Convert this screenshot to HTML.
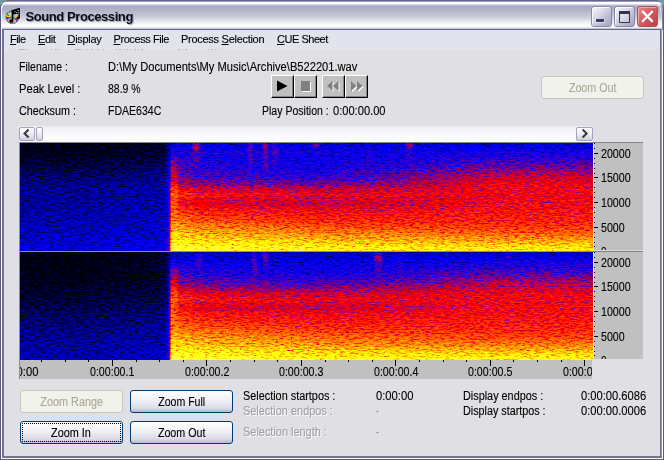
<!DOCTYPE html>
<html>
<head>
<meta charset="utf-8">
<title>Sound Processing</title>
<style>
html,body{margin:0;padding:0;}
body{width:664px;height:460px;overflow:hidden;background:#6b9aa6;position:relative;
 font-family:"Liberation Sans",sans-serif;font-size:11px;color:#000;}
.abs{position:absolute;}
#win{will-change:transform;position:absolute;left:0;top:0;width:664px;height:460px;background:#e0dfe3;border-radius:8px 8px 0 0;overflow:hidden;}
#bl0{left:0;top:0;width:1px;height:460px;background:#5c5c7c;}
#bl1{left:1px;top:6px;width:1px;height:453px;background:#f4f4fa;}
#bl2{left:2px;top:29px;width:2px;height:429px;background:#74748f;}
#br0{left:663px;top:0;width:1px;height:460px;background:#5c5c7c;}
#br1{left:662px;top:30px;width:1px;height:429px;background:#f8f8fc;}
#br2{left:661px;top:29px;width:1px;height:429px;background:#9a9ab4;}
#br3{left:660px;top:29px;width:1px;height:428px;background:#6a6a8a;}
#bb0{left:0;top:459px;width:664px;height:1px;background:#5c5c7c;}
#bb1{left:1px;top:458px;width:662px;height:1px;background:#f8f8fc;}
#bb2{left:2px;top:456px;width:660px;height:2px;background:#74748f;}
#title{left:0;top:0;width:664px;height:30px;border-radius:8px 8px 0 0;box-shadow:inset 0 0 0 1px #65658a;
 background:linear-gradient(to bottom,#62627f 0px,#6c6c8a 1px,#9c9cb6 1.5px,#ffffff 2.2px,#ffffff 3.6px,#c4c4d8 5px,#a9a9c6 6.5px,#b8b9cc 12px,#d0d2dc 18px,#ebecf0 22px,#fdfdfd 25px,#fdfdfd 27px,#c8c8d4 28.5px,#6e6e8e 29px,#6e6e8e 30px);}
#thl{left:1px;top:1.6px;width:658.2px;height:12px;border:1.6px solid #fff;border-bottom:none;border-radius:7px 7px 0 0;-webkit-mask-image:linear-gradient(to bottom,#000 0,#000 5px,transparent 12px);mask-image:linear-gradient(to bottom,#000 0,#000 5px,transparent 12px);}
#ttext{left:25.5px;top:9px;letter-spacing:-0.42px;font-weight:bold;font-size:13px;line-height:16px;white-space:nowrap;color:#0c0c14;text-shadow:1px 1px 1px rgba(120,120,150,.7);}
#menubar{left:4px;top:30px;width:656px;height:20px;background:#e2e4ed;}
.mi{position:absolute;top:32px;line-height:14px;white-space:nowrap;}
.mi u{text-decoration:underline;text-underline-offset:1px;}
.lbl{position:absolute;white-space:nowrap;line-height:14px;font-size:12px;}
.sx,.sc,.mi{-webkit-text-stroke:0.12px currentColor;}
.sx{display:inline-block;transform-origin:0 50%;white-space:nowrap;}
.sc{display:inline-block;transform-origin:50% 50%;white-space:nowrap;}
.dis{color:#a0a0a4;text-shadow:1px 1px 0 #fff;}
.cb{position:absolute;width:23px;height:23px;background:#c0c0c0;box-sizing:border-box;
 border:1px solid;border-color:#ffffff #000 #000 #ffffff;box-shadow:inset -1px -1px 0 #868686;}
.xb{position:absolute;width:103px;height:23px;box-sizing:border-box;border:1px solid #003c74;border-radius:3px;
 background:linear-gradient(to bottom,#ffffff 0%,#f4f4f8 35%,#dcdce8 80%,#b8b8d0 100%);text-align:center;line-height:23px;font-size:12px;}
.xd{position:absolute;width:103px;height:23px;box-sizing:border-box;border:1px solid #c9c7ba;border-radius:3px;background:#f2f2ec;
 text-align:center;line-height:23px;color:#aca899;font-size:12px;}
.tb{position:absolute;top:6px;width:21px;height:21px;box-sizing:border-box;border:1px solid #8a8aa8;border-radius:3px;
 background:linear-gradient(135deg,#f4f4fb 0%,#dcdcea 35%,#b4b4cc 75%,#a4a4c0 100%);box-shadow:inset 1px 1px 0 rgba(255,255,255,.8);}
#tbx{border-color:#b05058;background:linear-gradient(135deg,#e88888 0%,#d86468 40%,#c44a50 80%,#b84048 100%);box-shadow:inset 1px 1px 0 rgba(255,200,200,.6);}
#sbt{left:19px;top:126px;width:574px;height:16px;background:linear-gradient(to bottom,#ebebf0 0px,#f4f4f8 4px,#fcfcfd 11px,#fdfdfd 16px);}
.sbb{position:absolute;top:127px;height:14px;box-sizing:border-box;border:1px solid #a4a4bc;border-radius:2px;
 background:linear-gradient(to bottom,#ffffff 0%,#f0f0f6 40%,#d0d0e0 100%);}
#scale{left:593px;top:142px;width:50px;height:217px;background:#c0c0c0;overflow:hidden;}
#taxis{left:20px;top:360px;width:572px;height:19px;background:#c0c0c0;overflow:hidden;}
.ax{position:absolute;white-space:nowrap;line-height:14px;font-size:12px;}
</style>
</head>
<body>
<div id="win">
 <div id="title" class="abs"></div><div id="thl" class="abs"></div>
 <div id="menubar" class="abs"></div>
 <div class="abs" style="left:662px;top:7px;width:1px;height:23px;background:linear-gradient(to bottom,rgba(120,120,155,.3),#8484a4 6px)"></div>
 <div id="bl0" class="abs"></div><div id="bl1" class="abs"></div><div id="bl2" class="abs"></div>
 <div id="br0" class="abs"></div><div id="br1" class="abs"></div><div id="br2" class="abs"></div><div id="br3" class="abs"></div>
 <div id="bb2" class="abs"></div><div id="bb1" class="abs"></div><div id="bb0" class="abs"></div>

 <svg class="abs" style="left:0;top:49px" width="240" height="1" fill="#b4ae96" fill-opacity=".75"><rect x="13" y="0" width="1" height="1"/><rect x="19" y="0" width="6" height="1"/><rect x="26" y="0" width="1" height="1"/><rect x="45" y="0" width="1" height="1"/><rect x="51" y="0" width="1" height="1"/><rect x="55" y="0" width="1" height="1"/><rect x="57" y="0" width="1" height="1"/><rect x="59" y="0" width="1" height="1"/><rect x="75" y="0" width="6" height="1"/><rect x="82" y="0" width="1" height="1"/><rect x="87" y="0" width="1" height="1"/><rect x="91" y="0" width="2" height="1"/><rect x="97" y="0" width="2" height="1"/><rect x="103" y="0" width="1" height="1"/><rect x="116" y="0" width="1" height="1"/><rect x="119" y="0" width="2" height="1"/><rect x="123" y="0" width="1" height="1"/><rect x="126" y="0" width="2" height="1"/><rect x="130" y="0" width="1" height="1"/><rect x="134" y="0" width="2" height="1"/><rect x="138" y="0" width="1" height="1"/><rect x="141" y="0" width="2" height="1"/><rect x="178" y="0" width="2" height="1"/><rect x="182" y="0" width="1" height="1"/><rect x="185" y="0" width="2" height="1"/><rect x="208" y="0" width="1" height="1"/><rect x="211" y="0" width="2" height="1"/><rect x="215" y="0" width="1" height="1"/><rect x="218" y="0" width="1" height="1"/><rect x="6" y="0" width="1" height="1" fill="#fff"/></svg>

 <svg class="abs" style="left:5px;top:7px" width="20" height="20" viewBox="0 0 20 20">
  <circle cx="7.3" cy="10.3" r="6.2" fill="#b8b8b8" stroke="#111" stroke-width="1.1" stroke-dasharray="1 1.1"/>
  <circle cx="5.5" cy="8" r="2.2" fill="#d8d8d8"/>
  <path d="M7.3 10.3L1.6 6.6L1.2 8.2z" fill="#0b0"/><path d="M7.3 10.3L1.2 8.2L1.1 9.7z" fill="#fe0"/><path d="M7.3 10.3L1.1 9.7L1.2 11.2z" fill="#f00"/><path d="M7.3 10.3L1.2 11.2L1.6 12.4z" fill="#22e"/>
  <path d="M7.3 10.3L13.4 9.6L13.5 11.2z" fill="#fe0"/><path d="M7.3 10.3L13.5 11.2L13.2 12.8z" fill="#f00"/><path d="M7.3 10.3L13.2 12.8L12.5 14.2z" fill="#32d"/>
  <path d="M6.6 3.2L15 0.8V10.4C15 12.2 11.6 12.6 11.6 10.8C11.6 9.6 13.4 9.4 13.6 9.8V6.2L8.4 7.6V13.8C8.4 16.4 4.3 16.4 4.3 13.9C4.3 12.3 6.4 12.2 6.6 12.8z" fill="#000"/>
  <rect x="9.5" y="4.2" width="1" height="1" fill="#fff"/><rect x="11.2" y="5" width="1" height="1" fill="#ddd"/><rect x="12.6" y="3" width="1" height="1" fill="#fff"/><rect x="13.4" y="5.2" width="1" height="1" fill="#ddd"/><rect x="11.8" y="7.6" width="1" height="1" fill="#eee"/>
 </svg>
 <div id="ttext" class="abs">Sound Processing</div>
 <div class="mi" style="left:10px;letter-spacing:-0.57px"><u>F</u>ile</div>
 <div class="mi" style="left:38px;letter-spacing:-0.37px"><u>E</u>dit</div>
 <div class="mi" style="left:67.5px;letter-spacing:-0.3px"><u>D</u>isplay</div>
 <div class="mi" style="left:113.5px;letter-spacing:-0.42px"><u>P</u>rocess File</div>
 <div class="mi" style="left:181px;letter-spacing:-0.28px">Process <u>S</u>election</div>
 <div class="mi" style="left:277px;letter-spacing:-0.47px"><u>C</u>UE Sheet</div>
 <div class="lbl" style="left:18.8px;top:60px"><span class="sx" style="transform:scaleX(0.8745)">Filename :</span></div>
 <div class="lbl" style="left:18.8px;top:82px"><span class="sx" style="transform:scaleX(0.9296)">Peak Level :</span></div>
 <div class="lbl" style="left:18.8px;top:104px"><span class="sx" style="transform:scaleX(0.8996)">Checksum :</span></div>
 <div class="lbl" style="left:107.8px;top:60px"><span class="sx" style="transform:scaleX(0.9279)">D:\My Documents\My Music\Archive\B522201.wav</span></div>
 <div class="lbl" style="left:108.2px;top:82px"><span class="sx" style="transform:scaleX(0.8726)">88.9 %</span></div>
 <div class="lbl" style="left:107.8px;top:104px"><span class="sx" style="transform:scaleX(0.8780)">FDAE634C</span></div>
 <div class="lbl" style="left:261.8px;top:104px"><span class="sx" style="transform:scaleX(0.8784)">Play Position :</span></div>
 <div class="lbl" style="left:333.3px;top:104px"><span class="sx" style="transform:scaleX(0.9256)">0:00:00.00</span></div>
 <div class="lbl" style="left:243.3px;top:389px"><span class="sx" style="transform:scaleX(0.9053)">Selection startpos :</span></div>
 <div class="lbl dis" style="left:243.3px;top:404px"><span class="sx" style="transform:scaleX(0.9104)">Selection endpos :</span></div>
 <div class="lbl dis" style="left:243.3px;top:425px"><span class="sx" style="transform:scaleX(0.9113)">Selection length :</span></div>
 <div class="lbl" style="left:375.8px;top:389px"><span class="sx" style="transform:scaleX(0.9364)">0:00:00</span></div>
 <div class="lbl dis" style="left:375.8px;top:404px"><span class="sx" style="transform:scaleX(0.8750)">-</span></div>
 <div class="lbl dis" style="left:375.8px;top:425px"><span class="sx" style="transform:scaleX(0.8750)">-</span></div>
 <div class="lbl" style="left:463.3px;top:389px"><span class="sx" style="transform:scaleX(0.9040)">Display endpos :</span></div>
 <div class="lbl" style="left:463.3px;top:404px"><span class="sx" style="transform:scaleX(0.8974)">Display startpos :</span></div>
 <div class="lbl" style="left:580.8px;top:389px"><span class="sx" style="transform:scaleX(0.9304)">0:00:00.6086</span></div>
 <div class="lbl" style="left:580.8px;top:404px"><span class="sx" style="transform:scaleX(0.9304)">0:00:00.0006</span></div>

 <div id="sbt" class="abs"></div>
 <div class="sbb" style="left:19px;width:16px"><svg width="14" height="12" style="position:absolute;left:0;top:0"><path d="M8.6 1.6L4.6 5.6L8.6 9.6" stroke="#3a3a42" stroke-width="2.1" fill="none"/></svg></div>
 <div class="sbb" style="left:36px;width:7px"></div>
 <div class="sbb" style="left:576px;width:17px"><svg width="15" height="12" style="position:absolute;left:0;top:0"><path d="M5.6 1.6L9.6 5.6L5.6 9.6" stroke="#3a3a42" stroke-width="2.1" fill="none"/></svg></div>
 <svg class="abs" style="left:20px;top:142px" width="573" height="218" viewBox="0 0 573 218">
  <defs>
   <filter id="spec" x="0" y="0" width="573" height="218" filterUnits="userSpaceOnUse" color-interpolation-filters="sRGB">
    <feTurbulence type="fractalNoise" baseFrequency="0.2 0.7" numOctaves="2" seed="7" result="n"/>
    <feColorMatrix in="n" type="matrix" values="1 0 0 0 0  1 0 0 0 0  1 0 0 0 0  0 0 0 0 1" result="ng0"/>
    <feComponentTransfer in="ng0" result="ng"><feFuncR type="table" tableValues="0 0.14 0.5 0.63 0.72"/><feFuncG type="table" tableValues="0 0.14 0.5 0.63 0.72"/><feFuncB type="table" tableValues="0 0.14 0.5 0.63 0.72"/></feComponentTransfer>
    <feTurbulence type="fractalNoise" baseFrequency="0.41 0.83" numOctaves="1" seed="23" result="m"/>
    <feColorMatrix in="m" type="matrix" values="1 0 0 0 0  1 0 0 0 0  1 0 0 0 0  0 0 0 0 1" result="mg0"/>
    <feComponentTransfer in="mg0" result="mg"><feFuncR type="table" tableValues="0 0 0.2 0.85 1 1 1 1 1 1 1"/><feFuncG type="table" tableValues="0 0 0.2 0.85 1 1 1 1 1 1 1"/><feFuncB type="table" tableValues="0 0 0.2 0.85 1 1 1 1 1 1 1"/></feComponentTransfer>
    <feComposite in="SourceGraphic" in2="ng" operator="arithmetic" k1="0" k2="1" k3="0.32" k4="-0.16" result="i0"/>
    <feComposite in="i0" in2="mg" operator="arithmetic" k1="0" k2="1" k3="0.25" k4="-0.25" result="i"/>
    <feComponentTransfer in="i">
     <feFuncR type="table" tableValues="0 0 1 1 1"/>
     <feFuncG type="table" tableValues="0 0 0 1 1"/>
     <feFuncB type="table" tableValues="0 1 0 0 1"/>
    </feComponentTransfer>
   </filter>
   <linearGradient id="gR1b" x1="0" y1="0" x2="0" y2="109" gradientUnits="userSpaceOnUse">
    <stop offset="0.000" stop-color="#333333"/>
    <stop offset="0.073" stop-color="#424242"/>
    <stop offset="0.147" stop-color="#4c4c4c"/>
    <stop offset="0.220" stop-color="#5c5c5c"/>
    <stop offset="0.275" stop-color="#6b6b6b"/>
    <stop offset="0.330" stop-color="#787878"/>
    <stop offset="0.404" stop-color="#808080"/>
    <stop offset="0.532" stop-color="#808080"/>
    <stop offset="0.642" stop-color="#858585"/>
    <stop offset="0.734" stop-color="#8a8a8a"/>
    <stop offset="0.807" stop-color="#949494"/>
    <stop offset="0.862" stop-color="#a1a1a1"/>
    <stop offset="0.908" stop-color="#adadad"/>
    <stop offset="0.954" stop-color="#bababa"/>
    <stop offset="1.000" stop-color="#c7c7c7"/>
   </linearGradient>
   <linearGradient id="gR2b" x1="0" y1="110" x2="0" y2="218" gradientUnits="userSpaceOnUse">
    <stop offset="0.000" stop-color="#303030"/>
    <stop offset="0.056" stop-color="#404040"/>
    <stop offset="0.130" stop-color="#4a4a4a"/>
    <stop offset="0.204" stop-color="#595959"/>
    <stop offset="0.259" stop-color="#696969"/>
    <stop offset="0.315" stop-color="#757575"/>
    <stop offset="0.389" stop-color="#808080"/>
    <stop offset="0.537" stop-color="#828282"/>
    <stop offset="0.648" stop-color="#878787"/>
    <stop offset="0.731" stop-color="#8c8c8c"/>
    <stop offset="0.806" stop-color="#969696"/>
    <stop offset="0.861" stop-color="#a3a3a3"/>
    <stop offset="0.907" stop-color="#b0b0b0"/>
    <stop offset="0.954" stop-color="#bdbdbd"/>
    <stop offset="1.000" stop-color="#c7c7c7"/>
   </linearGradient>
   <linearGradient id="gR1" x1="0" y1="0" x2="0" y2="109" gradientUnits="userSpaceOnUse">
    <stop offset="0.000" stop-color="#363636"/>
    <stop offset="0.055" stop-color="#404040"/>
    <stop offset="0.257" stop-color="#454545"/>
    <stop offset="0.330" stop-color="#4f4f4f"/>
    <stop offset="0.385" stop-color="#5e5e5e"/>
    <stop offset="0.431" stop-color="#737373"/>
    <stop offset="0.486" stop-color="#808080"/>
    <stop offset="0.532" stop-color="#787878"/>
    <stop offset="0.569" stop-color="#747474"/>
    <stop offset="0.606" stop-color="#7d7d7d"/>
    <stop offset="0.670" stop-color="#858585"/>
    <stop offset="0.725" stop-color="#8c8c8c"/>
    <stop offset="0.789" stop-color="#999999"/>
    <stop offset="0.844" stop-color="#a6a6a6"/>
    <stop offset="0.899" stop-color="#b2b2b2"/>
    <stop offset="0.954" stop-color="#bfbfbf"/>
    <stop offset="1.000" stop-color="#c9c9c9"/>
   </linearGradient>
   <linearGradient id="gR2" x1="0" y1="110" x2="0" y2="218" gradientUnits="userSpaceOnUse">
    <stop offset="0.000" stop-color="#303030"/>
    <stop offset="0.074" stop-color="#3d3d3d"/>
    <stop offset="0.204" stop-color="#454545"/>
    <stop offset="0.278" stop-color="#525252"/>
    <stop offset="0.333" stop-color="#636363"/>
    <stop offset="0.380" stop-color="#757575"/>
    <stop offset="0.444" stop-color="#808080"/>
    <stop offset="0.491" stop-color="#787878"/>
    <stop offset="0.519" stop-color="#757575"/>
    <stop offset="0.565" stop-color="#808080"/>
    <stop offset="0.648" stop-color="#878787"/>
    <stop offset="0.713" stop-color="#8f8f8f"/>
    <stop offset="0.787" stop-color="#9c9c9c"/>
    <stop offset="0.852" stop-color="#a8a8a8"/>
    <stop offset="0.907" stop-color="#b5b5b5"/>
    <stop offset="0.954" stop-color="#bfbfbf"/>
    <stop offset="1.000" stop-color="#c9c9c9"/>
   </linearGradient>
   <linearGradient id="gL1" x1="0" y1="0" x2="0" y2="109" gradientUnits="userSpaceOnUse">
    <stop offset="0.000" stop-color="#050505"/>
    <stop offset="0.119" stop-color="#0a0a0a"/>
    <stop offset="0.257" stop-color="#171717"/>
    <stop offset="0.394" stop-color="#262626"/>
    <stop offset="0.670" stop-color="#2d2d2d"/>
    <stop offset="0.899" stop-color="#363636"/>
    <stop offset="1.000" stop-color="#3b3b3b"/>
   </linearGradient>
   <linearGradient id="gL2" x1="0" y1="110" x2="0" y2="218" gradientUnits="userSpaceOnUse">
    <stop offset="0.000" stop-color="#040404"/>
    <stop offset="0.259" stop-color="#080808"/>
    <stop offset="0.444" stop-color="#121212"/>
    <stop offset="0.630" stop-color="#1f1f1f"/>
    <stop offset="0.815" stop-color="#292929"/>
    <stop offset="1.000" stop-color="#303030"/>
   </linearGradient>
   <linearGradient id="hOn" x1="149" y1="0" x2="300" y2="0" gradientUnits="userSpaceOnUse">
    <stop offset="0.000" stop-color="#fff" stop-opacity="0.160"/>
    <stop offset="0.053" stop-color="#fff" stop-opacity="0.150"/>
    <stop offset="0.060" stop-color="#fff" stop-opacity="0.100"/>
    <stop offset="0.152" stop-color="#fff" stop-opacity="0.090"/>
    <stop offset="0.159" stop-color="#fff" stop-opacity="0.050"/>
    <stop offset="0.536" stop-color="#fff" stop-opacity="0.025"/>
    <stop offset="1.000" stop-color="#fff" stop-opacity="0.000"/>
   </linearGradient>
   <linearGradient id="hRt" x1="290" y1="0" x2="573" y2="0" gradientUnits="userSpaceOnUse">
    <stop offset="0.000" stop-color="#fff" stop-opacity="0.000"/>
    <stop offset="0.318" stop-color="#fff" stop-opacity="0.350"/>
    <stop offset="0.636" stop-color="#fff" stop-opacity="1.000"/>
    <stop offset="1.000" stop-color="#fff" stop-opacity="1.000"/>
   </linearGradient>
   <mask id="mRt" maskUnits="userSpaceOnUse" x="0" y="0" width="573" height="218"><rect x="290" y="0" width="283" height="218" fill="url(#hRt)"/></mask>
   <linearGradient id="hOnB" x1="149" y1="0" x2="330" y2="0" gradientUnits="userSpaceOnUse">
    <stop offset="0.000" stop-color="#fff" stop-opacity="0.090"/>
    <stop offset="0.282" stop-color="#fff" stop-opacity="0.080"/>
    <stop offset="0.613" stop-color="#fff" stop-opacity="0.050"/>
    <stop offset="1.000" stop-color="#fff" stop-opacity="0.000"/>
   </linearGradient>
   <linearGradient id="hLf" x1="0" y1="0" x2="149" y2="0" gradientUnits="userSpaceOnUse">
    <stop offset="0.000" stop-color="#fff" stop-opacity="0.000"/>
    <stop offset="0.403" stop-color="#fff" stop-opacity="0.000"/>
    <stop offset="0.805" stop-color="#fff" stop-opacity="0.020"/>
    <stop offset="0.960" stop-color="#fff" stop-opacity="0.030"/>
    <stop offset="0.980" stop-color="#fff" stop-opacity="0.060"/>
    <stop offset="1.000" stop-color="#fff" stop-opacity="0.150"/>
   </linearGradient>
   <linearGradient id="vTop" x1="0" y1="0" x2="0" y2="1">
    <stop offset="0" stop-color="#fff" stop-opacity="1"/><stop offset="0.7" stop-color="#fff" stop-opacity="1"/><stop offset="1" stop-color="#fff" stop-opacity="0"/>
   </linearGradient>
   <linearGradient id="vOn" x1="0" y1="0" x2="0" y2="1">
    <stop offset="0" stop-color="#fff" stop-opacity="0"/><stop offset="0.22" stop-color="#fff" stop-opacity="1"/><stop offset="1" stop-color="#fff" stop-opacity="1"/>
   </linearGradient>
   <linearGradient id="vSt" x1="0" y1="0" x2="0" y2="1">
    <stop offset="0" stop-color="#fff" stop-opacity="1"/><stop offset="0.5" stop-color="#fff" stop-opacity="0.8"/><stop offset="1" stop-color="#fff" stop-opacity="0"/>
   </linearGradient>
   <mask id="mTop1" maskUnits="userSpaceOnUse" x="0" y="0" width="573" height="109"><rect x="0" y="0" width="573" height="80" fill="url(#vTop)"/></mask>
   <mask id="mTop2" maskUnits="userSpaceOnUse" x="0" y="110" width="573" height="108"><rect x="0" y="110" width="573" height="75" fill="url(#vTop)"/></mask>
   <mask id="mOn1" maskUnits="userSpaceOnUse" x="0" y="0" width="573" height="109"><rect x="149" y="5" width="424" height="104" fill="url(#vOn)"/></mask>
   <mask id="mOn2" maskUnits="userSpaceOnUse" x="0" y="110" width="573" height="108"><rect x="149" y="115" width="424" height="103" fill="url(#vOn)"/></mask>
   <linearGradient id="vOnB" x1="0" y1="0" x2="0" y2="1"><stop offset="0" stop-color="#fff" stop-opacity="0"/><stop offset="0.45" stop-color="#fff" stop-opacity="1"/><stop offset="1" stop-color="#fff" stop-opacity="1"/></linearGradient>
   <mask id="mOnB1" maskUnits="userSpaceOnUse" x="0" y="0" width="573" height="109"><rect x="149" y="62" width="424" height="47" fill="url(#vOnB)"/></mask>
   <mask id="mOnB2" maskUnits="userSpaceOnUse" x="0" y="110" width="573" height="108"><rect x="149" y="172" width="424" height="46" fill="url(#vOnB)"/></mask>
   <clipPath id="cR1"><rect x="149" y="0" width="424" height="109"/></clipPath>
   <clipPath id="cR2"><rect x="149" y="110" width="424" height="108"/></clipPath>
   <filter id="ovb" x="-5%" y="-5%" width="110%" height="110%" color-interpolation-filters="sRGB"><feGaussianBlur stdDeviation="0.8 1.5"/></filter>
  </defs>
  <g filter="url(#spec)">
   <rect x="0" y="0" width="573" height="218" fill="#202020"/>
   <rect x="0" y="0" width="149" height="109" fill="url(#gL1)"/>
   <rect x="0" y="110" width="149" height="108" fill="url(#gL2)"/>
   <rect x="0" y="0" width="149" height="218" fill="url(#hLf)"/>
   <rect x="149" y="0" width="424" height="109" fill="url(#gR1)"/>
   <rect x="149" y="110" width="424" height="108" fill="url(#gR2)"/>
   <g mask="url(#mOn1)"><rect x="149" y="0" width="151" height="109" fill="url(#hOn)"/></g>
   <g mask="url(#mOn2)"><rect x="149" y="110" width="151" height="108" fill="url(#hOn)"/></g>
   <g mask="url(#mOnB1)"><rect x="149" y="0" width="181" height="109" fill="url(#hOnB)"/></g>
   <g mask="url(#mOnB2)"><rect x="149" y="110" width="181" height="108" fill="url(#hOnB)"/></g>
   <g mask="url(#mRt)"><rect x="290" y="0" width="283" height="109" fill="url(#gR1b)"/><rect x="290" y="110" width="283" height="108" fill="url(#gR2b)"/></g>
   <g clip-path="url(#cR1)"><g filter="url(#ovb)">
    <rect x="149" y="16" width="9" height="56" fill="#fff" fill-opacity="0.09"/>
    <rect x="172" y="0" width="8" height="7" fill="#fff" fill-opacity="0.22"/>
    <rect x="173" y="5" width="6" height="25" fill="url(#vSt)" fill-opacity="0.14"/>
    <rect x="228" y="0" width="5" height="36" fill="url(#vSt)" fill-opacity="0.14"/>
    <rect x="242" y="0" width="6" height="6" fill="#fff" fill-opacity="0.18"/>
    <rect x="243" y="4" width="5" height="34" fill="url(#vSt)" fill-opacity="0.15"/>
    <rect x="252" y="0" width="5" height="30" fill="url(#vSt)" fill-opacity="0.12"/>
    <rect x="293" y="0" width="6" height="6" fill="#fff" fill-opacity="0.22"/>
    <rect x="346" y="6" width="5" height="34" fill="url(#vSt)" fill-opacity="0.05"/>
    <rect x="386" y="0" width="7" height="6" fill="#fff" fill-opacity="0.22"/>
    <rect x="386" y="4" width="6" height="16" fill="url(#vSt)" fill-opacity="0.07"/>
    <rect x="180" y="10" width="130" height="2" fill="#fff" fill-opacity="0.05"/>
   </g></g>
   <g clip-path="url(#cR2)"><g filter="url(#ovb)">
    <rect x="149" y="126" width="9" height="50" fill="#fff" fill-opacity="0.09"/>
    <rect x="176" y="110" width="6" height="24" fill="url(#vSt)" fill-opacity="0.13"/>
    <rect x="232" y="110" width="5" height="35" fill="url(#vSt)" fill-opacity="0.14"/>
    <rect x="242" y="110" width="6" height="6" fill="#fff" fill-opacity="0.16"/>
    <rect x="243" y="114" width="5" height="18" fill="url(#vSt)" fill-opacity="0.14"/>
    <rect x="354" y="110" width="8" height="8" fill="#fff" fill-opacity="0.22"/>
    <rect x="355" y="116" width="7" height="22" fill="url(#vSt)" fill-opacity="0.12"/>
    <rect x="377" y="112" width="6" height="36" fill="url(#vSt)" fill-opacity="0.05"/>
    <rect x="486" y="110" width="6" height="14" fill="url(#vSt)" fill-opacity="0.07"/>
   </g></g>
   <rect x="149" y="0" width="1" height="218" fill="#000" fill-opacity=".45"/><rect x="150" y="0" width="1" height="218" fill="#000" fill-opacity=".2"/>
  </g>
  <rect x="0" y="109" width="573" height="1" fill="#00f000"/>
 </svg>
 <div id="scale" class="abs">
  <svg class="abs" style="left:0;top:0" width="50" height="218">
   <rect x="0" y="0" width="1" height="218" fill="#e4e4ea"/>
   <path d="M1 104.5h1M1 100.5h1M1 95.5h1M1 90.5h1M1 85.5h4M1 80.5h1M1 75.5h1M1 70.5h1M1 65.5h1M1 60.5h4M1 55.5h1M1 50.5h1M1 45.5h1M1 40.5h1M1 35.5h4M1 31.5h1M1 26.5h1M1 21.5h1M1 16.5h1M1 11.5h4M1 6.5h1M1 1.5h1M1 213.5h1M1 209.5h1M1 204.5h1M1 199.5h1M1 194.5h4M1 189.5h1M1 184.5h1M1 179.5h1M1 174.5h1M1 169.5h4M1 164.5h1M1 159.5h1M1 154.5h1M1 149.5h1M1 144.5h4M1 140.5h1M1 135.5h1M1 130.5h1M1 125.5h1M1 120.5h4M1 115.5h1M1 110.5h1" stroke="#000" stroke-width="1" fill="none" shape-rendering="crispEdges"/>
   <rect x="0" y="108" width="50" height="1" fill="#d8d8d8"/><rect x="0" y="109" width="50" height="1" fill="#808080"/>
  </svg>
  <div class="ax" style="left:7.5px;top:5px"><span class="sx" style="transform:scaleX(0.8869)">20000</span></div>
  <div class="ax" style="left:7.5px;top:29px"><span class="sx" style="transform:scaleX(0.8869)">15000</span></div>
  <div class="ax" style="left:7.5px;top:54px"><span class="sx" style="transform:scaleX(0.8869)">10000</span></div>
  <div class="ax" style="left:7.5px;top:79px"><span class="sx" style="transform:scaleX(0.8838)">5000</span></div>
  <div class="ax" style="left:7.5px;top:103px;height:5px;overflow:hidden"><span class="sx" style="transform:scaleX(0.8374)">0</span></div>
  <div class="ax" style="left:7.5px;top:114px"><span class="sx" style="transform:scaleX(0.8869)">20000</span></div>
  <div class="ax" style="left:7.5px;top:138px"><span class="sx" style="transform:scaleX(0.8869)">15000</span></div>
  <div class="ax" style="left:7.5px;top:163px"><span class="sx" style="transform:scaleX(0.8869)">10000</span></div>
  <div class="ax" style="left:7.5px;top:188px"><span class="sx" style="transform:scaleX(0.8838)">5000</span></div>
  <div class="ax" style="left:7.5px;top:212px;height:6px;overflow:hidden"><span class="sx" style="transform:scaleX(0.8374)">0</span></div>
 </div>
 <div id="taxis" class="abs">
  <svg class="abs" style="left:0;top:0" width="573" height="18">
   <path d="M21.5 0v2M45.5 0v2M68.5 0v2M92.5 0v6M116.5 0v2M139.5 0v2M163.5 0v2M186.5 0v6M210.5 0v2M234.5 0v2M257.5 0v2M281.5 0v6M305.5 0v2M328.5 0v2M352.5 0v2M375.5 0v6M399.5 0v2M423.5 0v2M446.5 0v2M470.5 0v6M493.5 0v2M517.5 0v2M541.5 0v2M564.5 0v6" stroke="#000" stroke-width="1" fill="none" shape-rendering="crispEdges"/>
  </svg>
  <div class="ax" style="left:-19.5px;top:5px"><span class="sx" style="transform:scaleX(0.9364)">0:00:00</span></div>
  <div class="ax" style="left:70.2px;top:5px"><span class="sx" style="transform:scaleX(0.8852)">0:00:00.1</span></div>
  <div class="ax" style="left:164.6px;top:5px"><span class="sx" style="transform:scaleX(0.8852)">0:00:00.2</span></div>
  <div class="ax" style="left:259.1px;top:5px"><span class="sx" style="transform:scaleX(0.8852)">0:00:00.3</span></div>
  <div class="ax" style="left:353.6px;top:5px"><span class="sx" style="transform:scaleX(0.8852)">0:00:00.4</span></div>
  <div class="ax" style="left:448.0px;top:5px"><span class="sx" style="transform:scaleX(0.8852)">0:00:00.5</span></div>
  <div class="ax" style="left:542.5px;top:5px"><span class="sx" style="transform:scaleX(0.8852)">0:00:00.6</span></div>
 </div>
 <div class="abs" style="left:20px;top:142px;width:623px;height:1px;background:#858585"></div>
 <div class="abs" style="left:19px;top:142px;width:1px;height:237px;background:#8c8c8c"></div>

 <div class="tb" style="left:591px"><svg width="19" height="19" style="position:absolute;left:0;top:0"><rect x="3.5" y="12.5" width="9" height="3" fill="#fff"/><rect x="4" y="12" width="8" height="3" fill="#3c3c60"/></svg></div>
 <div class="tb" style="left:614px"><svg width="19" height="19" style="position:absolute;left:0;top:0"><path d="M4.5 5.5h10v10h-10z" stroke="#34344c" stroke-width="1" fill="rgba(255,255,255,.25)"/><rect x="4" y="4" width="11" height="3" fill="#34344c"/></svg></div>
 <div class="tb" id="tbx" style="left:637px"><svg width="19" height="19" style="position:absolute;left:0;top:0"><path d="M5 5L15.4 15.4M15.4 5L5 15.4" stroke="#7a2a30" stroke-width="2.4" stroke-opacity=".55"/><path d="M4.2 4.2L14.8 14.8M14.8 4.2L4.2 14.8" stroke="#fff" stroke-width="2.4" stroke-linecap="butt"/></svg></div>
 <div class="cb" style="left:271px;top:75px"><svg width="21" height="21" style="position:absolute;left:0;top:0"><path d="M5 4.5V15.5L15.5 10z" fill="#000"/></svg></div>
 <div class="cb" style="left:294px;top:75px"><svg width="21" height="21" style="position:absolute;left:0;top:0"><rect x="7" y="6" width="9" height="10" fill="#fff"/><rect x="6" y="5" width="9" height="10" fill="#808080"/></svg></div>
 <div class="cb" style="left:322px;top:75px"><svg width="21" height="21" style="position:absolute;left:0;top:0"><path d="M10.5 6V16L5 11zM16.5 6V16L11 11z" fill="#fff"/><path d="M9.5 5V15L4 10zM15.5 5V15L10 10z" fill="#808080"/></svg></div>
 <div class="cb" style="left:345px;top:75px"><svg width="21" height="21" style="position:absolute;left:0;top:0"><path d="M6 6V16L11.5 11zM12 6V16L17.5 11z" fill="#fff"/><path d="M5 5V15L10.5 10zM11 5V15L16.5 10z" fill="#808080"/></svg></div>
 <div class="xd" style="left:541px;top:76px"><span class="sc" style="transform:scaleX(0.8921)">Zoom Out</span></div>
 <div class="xd" style="left:20px;top:390px"><span class="sc" style="transform:scaleX(0.9038)">Zoom Range</span></div>
 <div class="xb" style="left:130px;top:390px"><span class="sc" style="transform:scaleX(0.8811)">Zoom Full</span></div>
 <div class="xb" style="left:20px;top:421px"><span class="sc" style="transform:scaleX(0.9042)">Zoom In</span><div style="position:absolute;left:1px;top:1px;right:1px;bottom:1px;border:1px dotted #000"></div></div>
 <div class="xb" style="left:130px;top:421px"><span class="sc" style="transform:scaleX(0.8921)">Zoom Out</span></div>
</div>
</body>
</html>
